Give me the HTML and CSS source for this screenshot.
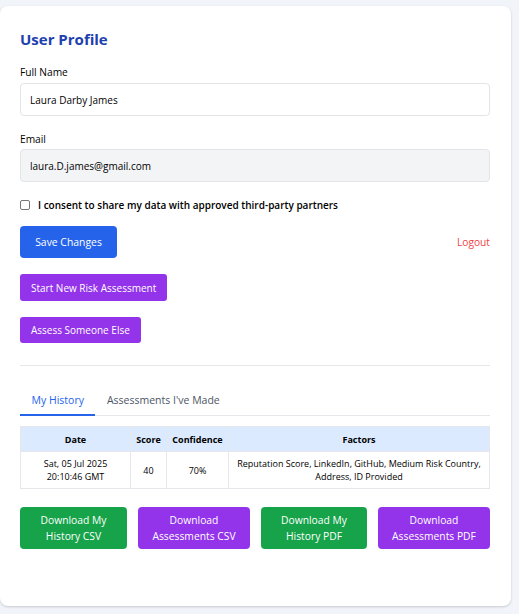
FILE: index.html
```html
<!DOCTYPE html>
<html lang="en">
<head>
<meta charset="utf-8">
<title>User Profile</title>
<link rel="stylesheet" href="styles.css">
</head>
<body>
<div class="card">
  <h2 class="title">User Profile</h2>

  <label class="label">Full Name</label>
  <div class="input">Laura Darby James</div>

  <label class="label label-email">Email</label>
  <div class="input input-disabled">laura.D.james@gmail.com</div>

  <div class="consent">
    <span class="checkbox"></span>
    <span class="consent-text">I consent to share my data with approved third-party partners</span>
  </div>

  <div class="actions">
    <button class="btn btn-blue">Save Changes</button>
    <a class="logout">Logout</a>
  </div>

  <div class="stack">
    <button class="btn-sm btn-purple">Start New Risk Assessment</button>
    <button class="btn-sm btn-purple btn-sm-b">Assess Someone Else</button>
  </div>

  <hr class="divider">

  <div class="tabs">
    <span class="tab tab-active">My History</span>
    <span class="tab">Assessments I've Made</span>
  </div>

  <table class="history">
    <thead>
      <tr>
        <th class="c-date">Date</th>
        <th class="c-score">Score</th>
        <th class="c-conf">Confidence</th>
        <th>Factors</th>
      </tr>
    </thead>
    <tbody>
      <tr>
        <td>Sat, 05 Jul 2025<br>20:10:46 GMT</td>
        <td>40</td>
        <td>70%</td>
        <td>Reputation Score, LinkedIn, GitHub, Medium Risk Country, Address, ID Provided</td>
      </tr>
    </tbody>
  </table>

  <div class="downloads">
    <button class="dl btn-green">Download My<br>History CSV</button>
    <button class="dl btn-purple">Download<br>Assessments CSV</button>
    <button class="dl btn-green">Download My<br>History PDF</button>
    <button class="dl btn-purple">Download<br>Assessments PDF</button>
  </div>
</div>
</body>
</html>
```

FILE: styles.css
```css
* { box-sizing: border-box; }

html, body {
  margin: 0;
  padding: 0;
}

body {
  background: #f1f4f9;
  font-family: "Open Sans", "Noto Sans", sans-serif;
  color: #111827;
  width: 519px;
  height: 614px;
  overflow: hidden;
}

.card {
  margin: 6px 8px 0 0;
  height: 600px;
  background: #ffffff;
  border-radius: 8px;
  box-shadow: 0 1px 3px rgba(0, 0, 0, 0.12), 0 1px 2px rgba(0, 0, 0, 0.06);
  padding: 22px 21px 0 20px;
  display: flex;
  flex-direction: column;
}

.title {
  margin: 0;
  font-size: 15px;
  line-height: 22px;
  font-weight: 700;
  color: #1e40af;
}

.label {
  display: block;
  margin-top: 14px;
  font-size: 10.2px;
  line-height: 16px;
  font-weight: 500;
  color: #000000;
}

.label-email { margin-top: 15px; }

.input {
  margin-top: 3px;
  height: 33px;
  border: 1px solid #e2e4e8;
  border-radius: 4px;
  padding: 0 9px;
  display: flex;
  align-items: center;
  font-size: 10px;
  color: #000000;
  background: #ffffff;
}

.input-disabled { background: #f3f4f6; margin-top: 2px; }

.consent {
  margin-top: 16px;
  display: flex;
  align-items: center;
  gap: 8px;
  height: 14px;
}

.checkbox {
  width: 10px;
  height: 10px;
  border: 1px solid #767676;
  border-radius: 2px;
  background: #fff;
  flex: none;
}

.consent-text {
  font-size: 10px;
  font-weight: 600;
  color: #000000;
}

.actions {
  margin-top: 14px;
  display: flex;
  justify-content: space-between;
  align-items: center;
}

.btn {
  border: none;
  border-radius: 4px;
  font-family: inherit;
  color: #ffffff;
  font-size: 10.4px;
  height: 32px;
  padding: 0;
  white-space: nowrap;
}

.btn-blue { background: #2563eb; width: 97px; }

.logout {
  font-size: 10.2px;
  color: #ef4444;
}

.stack {
  margin-top: 16px;
  display: flex;
  flex-direction: column;
  align-items: flex-start;
  gap: 16px;
}

.btn-sm {
  border: none;
  border-radius: 3px;
  font-family: inherit;
  color: #ffffff;
  font-size: 10px;
  height: 27px;
  padding: 0 11px;
  white-space: nowrap;
}

.btn-sm-b { height: 26px; }

.btn-purple { background: #9333ea; }
.btn-green { background: #16a34a; }

.divider {
  margin: 22px 0 0 0;
  border: none;
  border-top: 1px solid #e5e7eb;
  height: 0;
}

.tabs {
  margin-top: 21px;
  display: flex;
  border-bottom: 1px solid #e5e7eb;
}

.tab {
  font-size: 10.5px;
  line-height: 15px;
  padding: 6px 11.5px 7px 11.5px;
  color: #4b5563;
}

.tab-active {
  color: #2563eb;
  border-bottom: 2px solid #2563eb;
  margin-bottom: -1px;
  padding-bottom: 6px;
}

.history {
  margin-top: 10px;
  width: 100%;
  border-collapse: collapse;
  font-size: 9px;
  text-align: center;
  color: #000000;
}

.history th, .history td {
  border: 1px solid #e5e7eb;
  padding: 5px 3px;
  line-height: 13px;
}

.history th {
  background: #dbeafe;
  font-weight: 700;
  height: 25px;
}

.c-date { width: 110px; }
.c-score { width: 36px; }
.c-conf { width: 62px; }

.downloads {
  margin-top: 18px;
  display: grid;
  grid-template-columns: 107fr 112fr 106fr 112fr;
  column-gap: 11px;
}

.dl {
  border: none;
  border-radius: 4px;
  font-family: inherit;
  color: #ffffff;
  font-size: 10.3px;
  line-height: 16px;
  height: 42px;
  padding: 0 4px;
}
```
